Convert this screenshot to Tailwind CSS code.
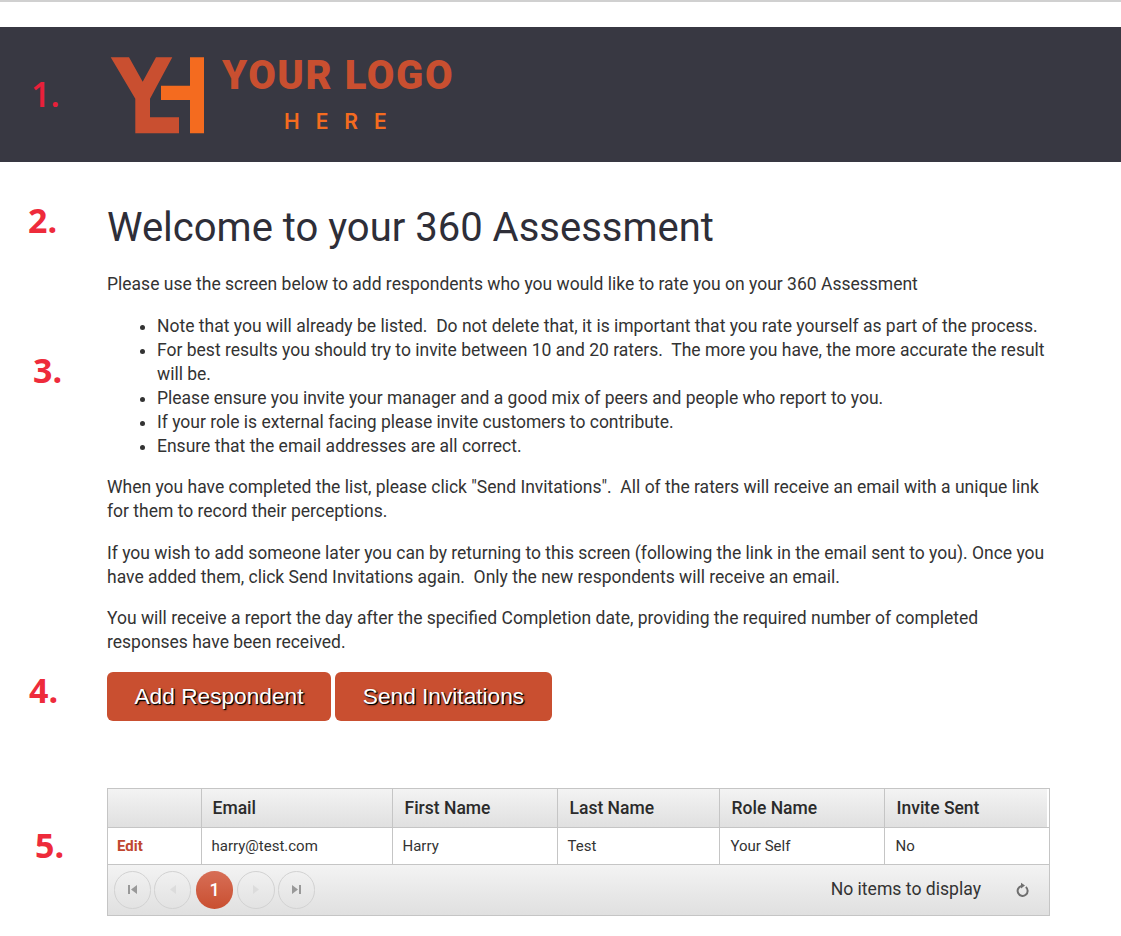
<!DOCTYPE html>
<html lang="en">
<head>
  <meta charset="UTF-8" />
  <title>360 Assessment</title>
  <script src="https://cdn.jsdelivr.net/npm/@tailwindcss/browser@4"></script>
</head>
<body class="relative h-[936px] overflow-hidden bg-white font-['Roboto',sans-serif] text-[#333]">

  <!-- Top rule -->
  <div class="h-[2px] bg-[#d0d0d0]"></div>

  <!-- Logo banner -->
  <header class="mt-[25px] h-[135px] bg-[#383842] pl-[110px] pt-[30px] flex items-start">
    <svg width="95" height="77" viewBox="0 0 95 77" class="shrink-0">
      <path d="M0.7 0.3H19L32.7 24.7L46 0.3H62.3L40 41.7V60.3H69V76.3H25.3V41.7Z" fill="#c94f30"/>
      <path d="M80 0.3H94V76.3H80V43H51V28.7H80Z" fill="#f46b1f"/>
    </svg>
    <div class="ml-[17px] w-[232px] -mt-[1px]">
      <div class="font-['Roboto',sans-serif] font-black text-[40px] leading-[40px] tracking-[1.6px] text-[#c94f30] whitespace-nowrap">YOUR LOGO</div>
      <div class="mt-[14px] ml-[62px] font-['Inter',sans-serif] font-semibold text-[21px] leading-[24px] tracking-[16px] text-[#f46b1f] whitespace-nowrap">HERE</div>
    </div>
  </header>

  <!-- Intro text -->
  <main class="pl-[107px] pr-[71px]">
    <h1 class="mt-[39px] text-[40px] leading-[54px] font-normal text-[#2e2e38]">Welcome to your 360 Assessment</h1>
    <p class="mt-[17px] text-[17.5px] leading-[24px]">Please use the screen below to add respondents who you would like to rate you on your 360 Assessment</p>
    <ul class="mt-[18px] pl-[50px] list-disc text-[17.5px] leading-[24px]">
      <li>Note that you will already be listed.&nbsp; Do not delete that, it is important that you rate yourself as part of the process.</li>
      <li>For best results you should try to invite between 10 and 20 raters.&nbsp; The more you have, the more accurate the result will be.</li>
      <li>Please ensure you invite your manager and a good mix of peers and people who report to you.</li>
      <li>If your role is external facing please invite customers to contribute.</li>
      <li>Ensure that the email addresses are all correct.</li>
    </ul>
    <p class="mt-[17px] text-[17.5px] leading-[24px]">When you have completed the list, please click "Send Invitations".&nbsp; All of the raters will receive an email with a unique link for them to record their perceptions.</p>
    <p class="mt-[18px] text-[17.5px] leading-[24px]">If you wish to add someone later you can by returning to this screen (following the link in the email sent to you). Once you have added them, click Send Invitations again.&nbsp; Only the new respondents will receive an email.</p>
    <p class="mt-[17px] text-[17.5px] leading-[24px]">You will receive a report the day after the specified Completion date, providing the required number of completed responses have been received.</p>

    <!-- Buttons -->
    <div class="mt-[18px] flex gap-[4px]">
      <button class="h-[49px] w-[224px] rounded-[6px] bg-[#c94f30] pb-[1px] font-['Liberation_Sans',sans-serif] text-[22.7px] text-white [text-shadow:1px_1px_2px_#000,1px_1px_0_#000]">Add Respondent</button>
      <button class="h-[49px] w-[217px] rounded-[6px] bg-[#c94f30] pb-[1px] font-['Liberation_Sans',sans-serif] text-[22.7px] text-white [text-shadow:1px_1px_2px_#000,1px_1px_0_#000]">Send Invitations</button>
    </div>

    <!-- Grid -->
    <div class="mt-[67px] w-[943px] border border-[#c5c5c5]">
      <div class="pr-[2px]">
        <table class="w-full table-fixed border-collapse bg-gradient-to-b from-[#f3f3f3] to-[#e0e0e0]">
          <colgroup>
            <col class="w-[93px]" /><col class="w-[191px]" /><col class="w-[165px]" /><col class="w-[162px]" /><col class="w-[165px]" /><col />
          </colgroup>
          <tr class="h-[38px] text-left text-[17.5px] font-medium text-[#2b2b2b]">
            <th class="font-medium"></th>
            <th class="border-l border-[#c5c5c5] pl-[11px] font-medium">Email</th>
            <th class="border-l border-[#c5c5c5] pl-[12px] font-medium">First Name</th>
            <th class="border-l border-[#c5c5c5] pl-[12px] font-medium">Last Name</th>
            <th class="border-l border-[#c5c5c5] pl-[12px] font-medium">Role Name</th>
            <th class="border-l border-[#c5c5c5] pl-[12px] font-medium">Invite Sent</th>
          </tr>
        </table>
      </div>
      <table class="w-full table-fixed border-collapse border-t border-[#c5c5c5]">
        <colgroup>
          <col class="w-[93px]" /><col class="w-[191px]" /><col class="w-[165px]" /><col class="w-[162px]" /><col class="w-[165px]" /><col />
        </colgroup>
        <tr class="h-[36px] text-[15px] text-[#333]">
          <td class="pl-[9px] pt-[1px] font-bold text-[#c0472f]">Edit</td>
          <td class="border-l border-[#c5c5c5] pl-[10px] pt-[1px]">harry@test.com</td>
          <td class="border-l border-[#c5c5c5] pl-[10px] pt-[1px]">Harry</td>
          <td class="border-l border-[#c5c5c5] pl-[10px] pt-[1px]">Test</td>
          <td class="border-l border-[#c5c5c5] pl-[11px] pt-[1px]">Your Self</td>
          <td class="border-l border-[#c5c5c5] pl-[11px] pt-[1px]">No</td>
        </tr>
      </table>
      <div class="h-[51px] border-t border-[#c5c5c5] bg-gradient-to-b from-[#f3f3f3] to-[#e0e0e0] flex items-center pl-[6px] pr-[19px]">
        <div class="flex items-center">
          <span class="w-[37px] h-[38px] rounded-full border border-[#d2d2d2] flex items-center justify-center">
            <svg width="9" height="9" viewBox="0 0 9 9"><path d="M0 0H2V9H0ZM9 0V9L3 4.5Z" fill="#999"/></svg>
          </span>
          <span class="ml-[3px] w-[37px] h-[38px] rounded-full border border-[#d2d2d2] flex items-center justify-center">
            <svg width="6" height="9" viewBox="0 0 6 9"><path d="M6 0V9L0 4.5Z" fill="#dcdcdc"/></svg>
          </span>
          <span class="ml-[5px] w-[37px] h-[38px] rounded-full bg-gradient-to-b from-[#d76e56] to-[#c94f30] flex items-center justify-center text-[18px] font-medium text-white">1</span>
          <span class="ml-[4px] w-[38px] h-[38px] rounded-full border border-[#d2d2d2] flex items-center justify-center">
            <svg width="6" height="9" viewBox="0 0 6 9"><path d="M0 0V9L6 4.5Z" fill="#dcdcdc"/></svg>
          </span>
          <span class="ml-[3px] w-[37px] h-[38px] rounded-full border border-[#d2d2d2] flex items-center justify-center">
            <svg width="9" height="9" viewBox="0 0 9 9"><path d="M0 0V9L6 4.5ZM7 0H9V9H7Z" fill="#999"/></svg>
          </span>
        </div>
        <span class="ml-auto text-[17.6px] text-[#333]">No items to display</span>
        <svg class="ml-[34px]" width="15" height="16" viewBox="0 0 15 16">
          <path d="M10.8 5A5 5 0 1 1 6.5 4" fill="none" stroke="#6f6f6f" stroke-width="2"/>
          <path d="M6 0.8L10 3.6L6 6.4Z" fill="#6f6f6f"/>
        </svg>
      </div>
    </div>
  </main>

  <!-- Red annotation numbers -->
  <span class="absolute left-[31px] top-[72px] text-[34px] leading-[44px] font-semibold text-[#e8203a] font-['Open_Sans',sans-serif]">1.</span>
  <span class="absolute left-[28px] top-[198px] text-[34px] leading-[44px] font-bold text-[#ee2b3b] font-['Open_Sans',sans-serif]">2.</span>
  <span class="absolute left-[33px] top-[348px] text-[34px] leading-[44px] font-bold text-[#ee2b3b] font-['Open_Sans',sans-serif]">3.</span>
  <span class="absolute left-[29px] top-[668px] text-[34px] leading-[44px] font-bold text-[#ee2b3b] font-['Open_Sans',sans-serif]">4.</span>
  <span class="absolute left-[35px] top-[823px] text-[34px] leading-[44px] font-bold text-[#ee2b3b] font-['Open_Sans',sans-serif]">5.</span>
</body>
</html>
